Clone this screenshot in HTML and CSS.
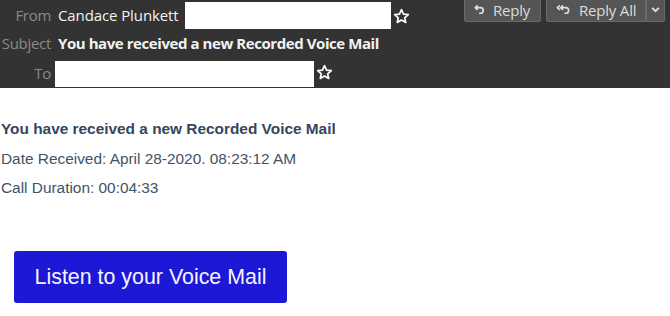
FILE: index.html
```html
<!DOCTYPE html>
<html>
<head>
<meta charset="utf-8">
<link rel="stylesheet" href="styles.css">
</head>
<body>
<header class="hdr">
  <div class="fields">
    <div class="row r1">
      <span class="lbl">From</span>
      <span class="val">Candace Plunkett</span>
      <span class="mask mask-from"></span>
      <svg class="star" viewBox="0 0 16 16"><path d="M8 1.6l1.9 4.1 4.5.5-3.4 3 1 4.4L8 11.3l-4 2.3 1-4.4-3.4-3 4.5-.5z" fill="none" stroke="#fff" stroke-width="1.6" stroke-linejoin="round"/></svg>
    </div>
    <div class="row r2">
      <span class="lbl">Subject</span>
      <span class="val subj">You have received a new Recorded Voice Mail</span>
    </div>
    <div class="row r3">
      <span class="lbl">To</span>
      <span class="mask mask-to"></span>
      <svg class="star" viewBox="0 0 16 16"><path d="M8 1.6l1.9 4.1 4.5.5-3.4 3 1 4.4L8 11.3l-4 2.3 1-4.4-3.4-3 4.5-.5z" fill="none" stroke="#fff" stroke-width="1.6" stroke-linejoin="round"/></svg>
    </div>
  </div>
  <div class="actions">
    <button class="btn reply"><svg class="ico" viewBox="0 0 14 14"><path d="M5 2.5L2.5 5 5 7.5M2.8 5h5.2a3 3 0 0 1 0 6H6.5" fill="none" stroke="#ddd" stroke-width="1.8"/></svg>Reply</button>
    <div class="split">
      <button class="btn replyall"><svg class="ico ico2" viewBox="0 0 18 14"><path d="M5 2.5L2.5 5 5 7.5M8.5 2.5L6 5l2.5 2.5M6.3 5h5.2a3 3 0 0 1 0 6H10" fill="none" stroke="#ddd" stroke-width="1.8"/></svg>Reply All</button>
      <button class="btn drop"><svg viewBox="0 0 10 10" class="chev"><path d="M2 3.5l3 3 3-3" fill="none" stroke="#ddd" stroke-width="1.8"/></svg></button>
    </div>
    <button class="btn more"></button>
  </div>
</header>
<main class="msg">
  <p class="title">You have received a new Recorded Voice Mail</p>
  <p class="line">Date Received: April 28-2020. 08:23:12 AM</p>
  <p class="line">Call Duration: 00:04:33</p>
  <a class="cta" href="#">Listen to your Voice Mail</a>
</main>
</body>
</html>
```
FILE: styles.css
```css
html, body { margin: 0; padding: 0; background: #fff; }
body { width: 670px; height: 316px; overflow: hidden; }

.hdr {
  background: #333333;
  height: 88px;
  display: flex;
  justify-content: space-between;
  font-family: "Open Sans", "Noto Sans", sans-serif;
  font-size: 15px;
  color: #f2f2f2;
  overflow: hidden;
}
.fields { display: flex; flex-direction: column; flex: none; }
.row { display: flex; align-items: center; }
.r1 { height: 31px; padding-top: 2px; align-items: flex-start; }
.r2 { height: 28px; margin-top: -3px; }
.r3 { height: 27px; margin-top: 4px; align-items: flex-start; }
.lbl {
  width: 51px;
  text-align: right;
  color: #8a8a8a;
  flex: none;
  letter-spacing: -0.3px;
}
.r1 .lbl, .r1 .val { line-height: 27px; }
.r3 .lbl { line-height: 25px; }
.val { margin-left: 7px; white-space: nowrap; letter-spacing: -0.1px; }
.subj { font-weight: 700; letter-spacing: -0.43px; font-size: 15px; }
.mask { background: #fff; display: block; flex: none; }
.mask-from { width: 206px; height: 27px; margin-left: 6px; }
.mask-to { width: 259px; height: 26px; margin-left: 4px; }
.star { width: 17px; height: 17px; margin-left: 2px; flex: none; }
.r1 .star { margin-top: 6px; }
.r3 .star { margin-top: 3px; }

.actions { display: flex; gap: 5px; margin-top: -3px; margin-right: -12px; }
.btn {
  font-family: inherit;
  font-size: 15px;
  letter-spacing: -0.2px;
  color: #dcdcdc;
  background: #555555;
  border: 1px solid #6a6a6a;
  border-radius: 2px;
  height: 25px;
  padding: 0 8px;
  display: flex;
  align-items: center;
  gap: 7px;
}
.reply { width: 77px; }
.split { display: flex; }
.replyall { width: 100px; border-radius: 2px 0 0 2px; }
.drop { width: 19px; padding: 0; justify-content: center; border-left: 1px solid #6a6a6a; border-radius: 0 2px 2px 0; }
.more { width: 12px; padding: 0; border-radius: 2px 0 0 2px; }
.ico { width: 13px; height: 13px; flex: none; }
.ico2 { width: 17px; }
.chev { width: 11px; height: 11px; }

.msg {
  padding: 26px 0 0 1px;
  font-family: "Liberation Sans", Arial, sans-serif;
  font-size: 15.4px;
  color: #415368;
}
.msg p { margin: 0; line-height: 29.5px; }
.title { font-weight: bold; color: #34465e; }
.cta {
  display: inline-block;
  margin: 48px 0 0 13px;
  width: 273px;
  height: 52px;
  line-height: 52px;
  text-align: center;
  background: #1d17d6;
  color: #f4f4ff;
  font-size: 21.4px;
  text-decoration: none;
  border-radius: 3px;
}
```
